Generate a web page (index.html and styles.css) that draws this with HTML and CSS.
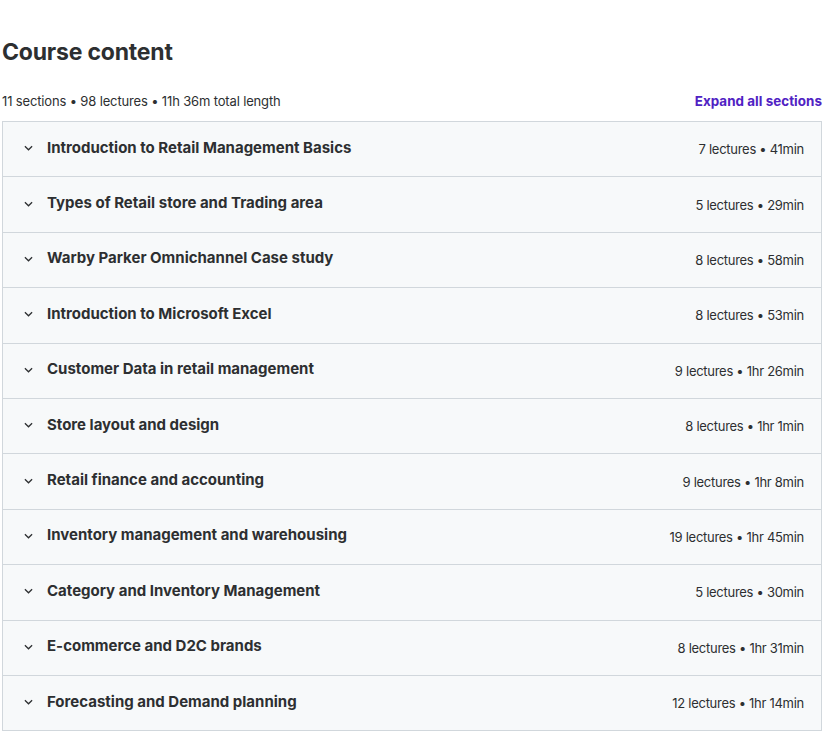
FILE: index.html
```html
<!DOCTYPE html>
<html>
<head>
<meta charset="utf-8">
<link rel="stylesheet" href="styles.css">
</head>
<body>
<div class="page">
  <h2 class="title">Course content</h2>
  <div class="meta">
    <span class="summary">11 sections • 98 lectures • 11h 36m total length</span>
    <button class="expand">Expand all sections</button>
  </div>
  <div class="sections">
    <div class="row"><span class="left"><svg class="chev" viewBox="0 0 10 6"><path d="M1 1l4 4 4-4" /></svg><span class="name">Introduction to Retail Management Basics</span></span><span class="info">7 lectures • 41min</span></div>
    <div class="row"><span class="left"><svg class="chev" viewBox="0 0 10 6"><path d="M1 1l4 4 4-4" /></svg><span class="name">Types of Retail store and Trading area</span></span><span class="info">5 lectures • 29min</span></div>
    <div class="row"><span class="left"><svg class="chev" viewBox="0 0 10 6"><path d="M1 1l4 4 4-4" /></svg><span class="name">Warby Parker Omnichannel Case study</span></span><span class="info">8 lectures • 58min</span></div>
    <div class="row"><span class="left"><svg class="chev" viewBox="0 0 10 6"><path d="M1 1l4 4 4-4" /></svg><span class="name">Introduction to Microsoft Excel</span></span><span class="info">8 lectures • 53min</span></div>
    <div class="row"><span class="left"><svg class="chev" viewBox="0 0 10 6"><path d="M1 1l4 4 4-4" /></svg><span class="name">Customer Data in retail management</span></span><span class="info">9 lectures • 1hr 26min</span></div>
    <div class="row"><span class="left"><svg class="chev" viewBox="0 0 10 6"><path d="M1 1l4 4 4-4" /></svg><span class="name">Store layout and design</span></span><span class="info">8 lectures • 1hr 1min</span></div>
    <div class="row"><span class="left"><svg class="chev" viewBox="0 0 10 6"><path d="M1 1l4 4 4-4" /></svg><span class="name">Retail finance and accounting</span></span><span class="info">9 lectures • 1hr 8min</span></div>
    <div class="row"><span class="left"><svg class="chev" viewBox="0 0 10 6"><path d="M1 1l4 4 4-4" /></svg><span class="name">Inventory management and warehousing</span></span><span class="info">19 lectures • 1hr 45min</span></div>
    <div class="row"><span class="left"><svg class="chev" viewBox="0 0 10 6"><path d="M1 1l4 4 4-4" /></svg><span class="name">Category and Inventory Management</span></span><span class="info">5 lectures • 30min</span></div>
    <div class="row"><span class="left"><svg class="chev" viewBox="0 0 10 6"><path d="M1 1l4 4 4-4" /></svg><span class="name">E-commerce and D2C brands</span></span><span class="info">8 lectures • 1hr 31min</span></div>
    <div class="row"><span class="left"><svg class="chev" viewBox="0 0 10 6"><path d="M1 1l4 4 4-4" /></svg><span class="name">Forecasting and Demand planning</span></span><span class="info">12 lectures • 1hr 14min</span></div>
  </div>
</div>
</body>
</html>
```
FILE: styles.css
```css
* { box-sizing: border-box; }
html, body { margin: 0; padding: 0; background: #fff; }
body {
  font-family: Inter, "Noto Sans", sans-serif;
  color: #2d2f31;
}
.page {
  width: 822px;
  padding-left: 2px;
  padding-top: 37px;
}
.title {
  margin: 0;
  font-size: 23px;
  font-weight: 700;
  line-height: 30px;
  letter-spacing: -0.2px;
}
.meta {
  display: flex;
  justify-content: space-between;
  align-items: center;
  margin-top: 20px;
  height: 29px;
  padding-bottom: 1px;
}
.summary {
  font-size: 13px;
  letter-spacing: -0.15px;
  color: #2d2f31;
}
.expand {
  border: 0;
  background: none;
  padding: 0;
  font-family: inherit;
  font-size: 13.4px;
  letter-spacing: 0.05px;
  font-weight: 700;
  color: #5022c3;
  cursor: pointer;
}
.sections {
  border: 1px solid #d1d7dc;
  border-bottom: 0;
  margin-top: 5px;
}
.row {
  display: flex;
  justify-content: space-between;
  align-items: center;
  height: 55.4px;
  background: #f7f9fa;
  border-bottom: 1px solid #d1d7dc;
  padding: 0 17px 0 21px;
}
.left {
  display: flex;
  align-items: center;
}
.chev {
  width: 9px;
  height: 6px;
  fill: none;
  stroke: #2d2f31;
  stroke-width: 1.4;
  margin-right: 14px;
  margin-top: -2px;
}
.name {
  font-size: 15px;
  font-weight: 700;
  margin-top: -4px;
}
.info {
  font-size: 13px;
  letter-spacing: -0.28px;
  color: #2d2f31;
}
```
